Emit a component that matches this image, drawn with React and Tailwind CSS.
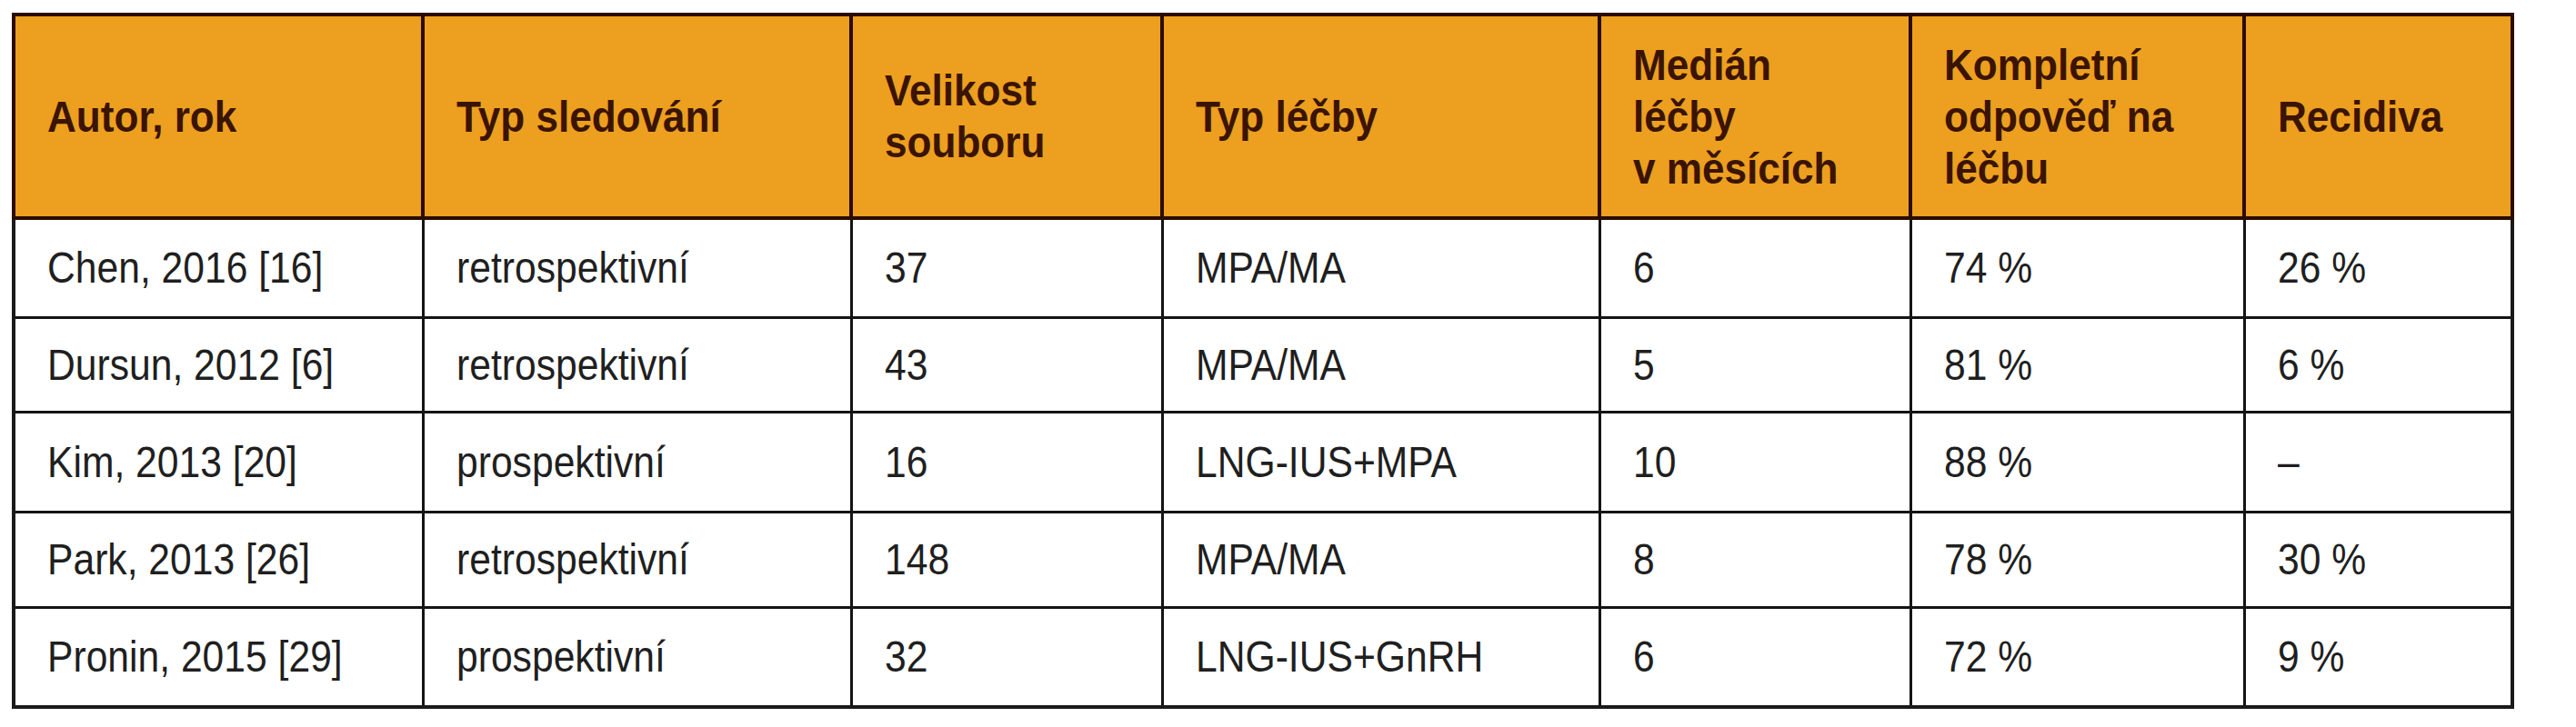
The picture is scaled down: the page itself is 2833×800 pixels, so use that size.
const headers = [
  ['Autor, rok'],
  ['Typ sledování'],
  ['Velikost', 'souboru'],
  ['Typ léčby'],
  ['Medián', 'léčby', 'v měsících'],
  ['Kompletní', 'odpověď na', 'léčbu'],
  ['Recidiva'],
];

const cols = ['w-[450px]', 'w-[471px]', 'w-[342px]', 'w-[481px]', 'w-[342px]', 'w-[367px]', 'w-[295px]'];

const rows = [
  { h: 'h-[109px]', cells: ['Chen, 2016 [16]', 'retrospektivní', '37', 'MPA/MA', '6', '74 %', '26 %'] },
  { h: 'h-[104px]', cells: ['Dursun, 2012 [6]', 'retrospektivní', '43', 'MPA/MA', '5', '81 %', '6 %'] },
  { h: 'h-[110px]', cells: ['Kim, 2013 [20]', 'prospektivní', '16', 'LNG-IUS+MPA', '10', '88 %', '–'] },
  { h: 'h-[105px]', cells: ['Park, 2013 [26]', 'retrospektivní', '148', 'MPA/MA', '8', '78 %', '30 %'] },
  { h: 'h-[110px]', cells: ['Pronin, 2015 [29]', 'prospektivní', '32', 'LNG-IUS+GnRH', '6', '72 %', '9 %'] },
];

const App = () => {
  return (
    <div className="w-[2833px] h-[800px] bg-white pt-[14px] pl-[13px] font-['Liberation_Sans',sans-serif]">
      <table className="table-fixed border-collapse w-[2752px] border-[4px] border-[#1a1a1a]">
        <colgroup>
          {cols.map((c, i) => <col key={i} className={c} />)}
        </colgroup>
        <thead>
          <tr className="h-[224px] bg-[#ed9f1f]">
            {headers.map((lines, i) => (
              <th key={i} className="border-[4px] border-[#2a0c00] pl-[35px] pr-2 text-left align-middle font-bold text-[49px] leading-[57px] text-[#3a1400]">
                {lines.map((l, j) => (
                  <span key={j} className="block whitespace-nowrap origin-left scale-x-[0.9]">{l}</span>
                ))}
              </th>
            ))}
          </tr>
        </thead>
        <tbody>
          {rows.map((row, i) => (
            <tr key={i} className={row.h}>
              {row.cells.map((c, j) => (
                <td key={j} className="border-[3px] border-[#141414] pl-[35px] pr-2 align-middle text-[49px] leading-none text-[#1f1f1f] whitespace-nowrap">
                  <span className="inline-block origin-left scale-x-[0.87]">{c}</span>
                </td>
              ))}
            </tr>
          ))}
        </tbody>
      </table>
    </div>
  );
};

export default App;
